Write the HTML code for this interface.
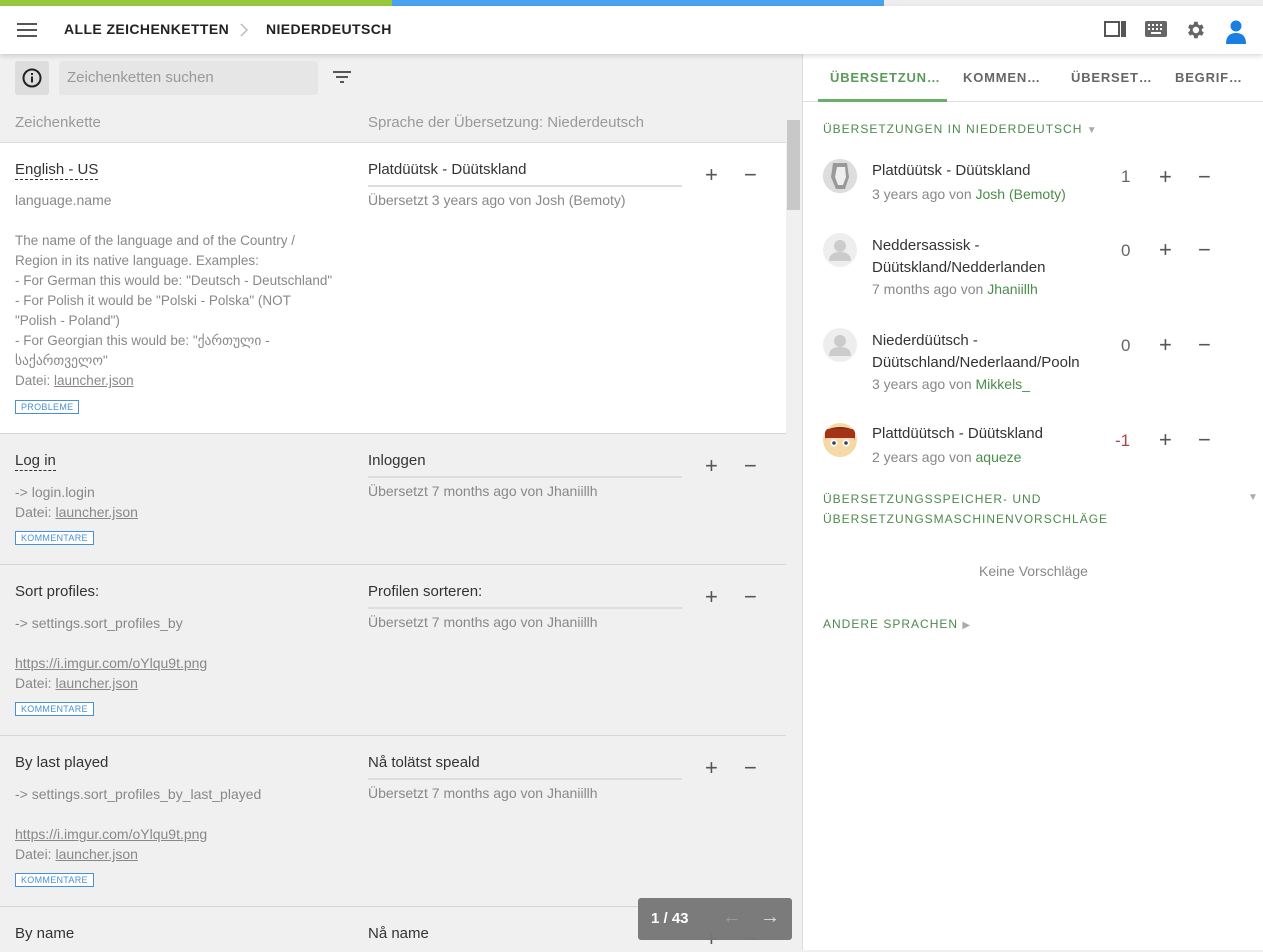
<!DOCTYPE html>
<html><head><meta charset="utf-8"><style>
*{box-sizing:border-box;margin:0;padding:0}
body{width:1263px;height:950px;overflow:hidden;font-family:"Liberation Sans","DejaVu Sans",sans-serif;background:#f0f0f0;position:relative;color:#333}
.a{position:absolute;white-space:nowrap}
.t{font-size:15px;color:#333}
.s{font-size:14px;color:#888}
.u{text-decoration:underline}
.tag{position:absolute;font-size:9px;color:#4a90d9;border:1px solid #4a90d9;padding:1px 5px;letter-spacing:.3px;background:#fff}
.pm{position:absolute;font-size:22px;color:#555;font-weight:300}
.line{position:absolute;height:2px;background:#ddd;width:314px;left:368px}
.sep{position:absolute;left:0;width:786px;height:1px;background:#d6d6d6}
.g{color:#4b8b4b}
.av{position:absolute;left:823px;width:34px;height:34px;border-radius:50%;background:#eee;overflow:hidden}
</style></head><body>
<div class="a" style="left:0;top:0;width:392px;height:6px;background:#98c93c"></div>
<div class="a" style="left:392px;top:0;width:492px;height:6px;background:#4aa3f0"></div>
<div class="a" style="left:884px;top:0;width:379px;height:6px;background:#eee"></div>
<div class="a" style="left:0;top:6px;width:1263px;height:48px;background:#fff;box-shadow:0 2px 5px rgba(0,0,0,.15);z-index:2"></div>
<div style="position:absolute;z-index:3;left:0;top:6px;width:1263px;height:48px">
<svg class="a" style="left:17px;top:16px" width="20" height="16"><rect y="1" width="20" height="2" fill="#555"/><rect y="7" width="20" height="2" fill="#555"/><rect y="13" width="20" height="2" fill="#555"/></svg>
<div class="a" style="left:64px;top:15px;font-size:14px;font-weight:bold;letter-spacing:.4px;color:#222">ALLE ZEICHENKETTEN</div>
<svg class="a" style="left:239px;top:17px" width="10" height="14"><path d="M2 1l6 6-6 6" fill="none" stroke="#bbb" stroke-width="1.5"/></svg>
<div class="a" style="left:266px;top:15px;font-size:14px;font-weight:bold;letter-spacing:.4px;color:#222">NIEDERDEUTSCH</div>
<svg class="a" style="left:1104px;top:15px" width="23" height="17"><rect x="1" y="1" width="14" height="14" fill="none" stroke="#555" stroke-width="2"/><rect x="17" y="0" width="5" height="16" fill="#555"/></svg>
<svg class="a" style="left:1145px;top:15px" width="22" height="16"><rect width="22" height="16" rx="2" fill="#666"/><g fill="#fff"><rect x="3" y="3" width="2" height="2"/><rect x="7" y="3" width="2" height="2"/><rect x="11" y="3" width="2" height="2"/><rect x="15" y="3" width="2" height="2"/><rect x="3" y="7" width="2" height="2"/><rect x="7" y="7" width="2" height="2"/><rect x="11" y="7" width="2" height="2"/><rect x="15" y="7" width="2" height="2"/><rect x="6" y="11" width="10" height="2"/></g></svg>
<svg class="a" style="left:1184px;top:13px" width="22" height="22" viewBox="0 0 24 24"><path fill="#666" d="M19.4 13a7.5 7.5 0 000-2l2.1-1.6-2-3.5-2.5 1a7.6 7.6 0 00-1.7-1L15 3h-4l-.4 2.7a7.6 7.6 0 00-1.7 1l-2.5-1-2 3.5L6.5 11a7.5 7.5 0 000 2l-2.1 1.6 2 3.5 2.5-1a7.6 7.6 0 001.7 1L11 21h4l.4-2.7a7.6 7.6 0 001.7-1l2.5 1 2-3.5zM13 15.5A3.5 3.5 0 1113 8.5a3.5 3.5 0 010 7z"/></svg>
<svg class="a" style="left:1226px;top:14px" width="20" height="24"><circle cx="10" cy="6" r="5.5" fill="#1a7fe0"/><path d="M0 24c0-8 4-11 10-11s10 3 10 11z" fill="#1a7fe0"/></svg>
</div>

<div class="a" style="left:15px;top:61px;width:34px;height:34px;background:#ddd;border-radius:3px"></div>
<svg class="a" style="left:22px;top:68px" width="20" height="20"><circle cx="10" cy="10" r="8.5" fill="none" stroke="#222" stroke-width="2"/><rect x="9" y="8.5" width="2" height="6" fill="#222"/><rect x="9" y="5" width="2" height="2" fill="#222"/></svg>
<div class="a" style="left:59px;top:61px;width:259px;height:34px;background:#e6e6e6;border-radius:3px"></div>
<div class="a" style="left:67px;top:69px;font-size:15px;color:#999">Zeichenketten suchen</div>
<svg class="a" style="left:333px;top:71px" width="18" height="13"><rect width="18" height="2" fill="#555"/><rect x="3" y="5" width="12" height="2" fill="#555"/><rect x="7" y="10" width="4" height="2" fill="#555"/></svg>
<div class="a" style="left:15px;top:114px;font-size:15px;color:#999">Zeichenkette</div>
<div class="a" style="left:368px;top:114px;font-size:15px;color:#999">Sprache der Übersetzung: Niederdeutsch</div>

<div class="a" style="left:0;top:142px;width:786px;height:1px;background:#ddd"></div>
<div class="a" style="left:0;top:143px;width:786px;height:290px;background:#fff"></div>
<div class="a" style="left:786px;top:112px;width:16px;height:838px;background:#f0f0f0"></div>
<div class="a" style="left:787px;top:120px;width:13px;height:90px;background:#c8c8c8"></div>
<div class="a" style="left:802px;top:54px;width:1px;height:896px;background:#ddd"></div>

<div class="a t" style="left:15px;top:161px;border-bottom:1px dashed #333;line-height:18px">English - US</div>
<div class="a s" style="left:15px;top:192px">language.name</div>
<div class="a s" style="left:15px;top:231px;line-height:20px;font-size:13.5px">The name of the language and of the Country /<br>Region in its native language. Examples:<br>- For German this would be: "Deutsch - Deutschland"<br>- For Polish it would be "Polski - Polska" (NOT<br>"Polish - Poland")<br>- For Georgian this would be: "ქართული -<br>საქართველო"<br>Datei: <span class="u">launcher.json</span></div>
<div class="tag" style="left:15px;top:400px">PROBLEME</div>
<div class="a t" style="left:368px;top:161px">Platdüütsk - Düütskland</div>
<div class="line" style="top:185px"></div>
<div class="a s" style="left:368px;top:192px">Übersetzt 3 years ago von Josh (Bemoty)</div>
<div class="pm" style="left:705px;top:162px">+</div><div class="pm" style="left:744px;top:162px">−</div>
<div class="sep" style="top:433px"></div>

<div class="a t" style="left:15px;top:452px;border-bottom:1px dashed #333;line-height:18px">Log in</div>
<div class="a s" style="left:15px;top:482px;line-height:20px">-&gt; login.login<br>Datei: <span class="u">launcher.json</span></div>
<div class="tag" style="left:15px;top:531px">KOMMENTARE</div>
<div class="a t" style="left:368px;top:452px">Inloggen</div>
<div class="line" style="top:476px"></div>
<div class="a s" style="left:368px;top:483px">Übersetzt 7 months ago von Jhaniillh</div>
<div class="pm" style="left:705px;top:453px">+</div><div class="pm" style="left:744px;top:453px">−</div>
<div class="sep" style="top:564px"></div>

<div class="a t" style="left:15px;top:583px">Sort profiles:</div>
<div class="a s" style="left:15px;top:613px;line-height:20px">-&gt; settings.sort_profiles_by<br><br><span class="u">https://i.imgur.com/oYlqu9t.png</span><br>Datei: <span class="u">launcher.json</span></div>
<div class="tag" style="left:15px;top:702px">KOMMENTARE</div>
<div class="a t" style="left:368px;top:583px">Profilen sorteren:</div>
<div class="line" style="top:607px"></div>
<div class="a s" style="left:368px;top:614px">Übersetzt 7 months ago von Jhaniillh</div>
<div class="pm" style="left:705px;top:584px">+</div><div class="pm" style="left:744px;top:584px">−</div>
<div class="sep" style="top:735px"></div>

<div class="a t" style="left:15px;top:754px">By last played</div>
<div class="a s" style="left:15px;top:784px;line-height:20px">-&gt; settings.sort_profiles_by_last_played<br><br><span class="u">https://i.imgur.com/oYlqu9t.png</span><br>Datei: <span class="u">launcher.json</span></div>
<div class="tag" style="left:15px;top:873px">KOMMENTARE</div>
<div class="a t" style="left:368px;top:754px">Nå tolätst speald</div>
<div class="line" style="top:778px"></div>
<div class="a s" style="left:368px;top:785px">Übersetzt 7 months ago von Jhaniillh</div>
<div class="pm" style="left:705px;top:755px">+</div><div class="pm" style="left:744px;top:755px">−</div>
<div class="sep" style="top:906px"></div>

<div class="a t" style="left:15px;top:925px">By name</div>
<div class="a t" style="left:368px;top:925px">Nå name</div>
<div class="pm" style="left:705px;top:926px">+</div><div class="pm" style="left:744px;top:926px">−</div>
<div class="a" style="left:638px;top:898px;width:154px;height:42px;background:#777;border-radius:3px;opacity:.97"></div>
<div class="a" style="left:651px;top:910px;font-size:15px;font-weight:bold;color:#fff">1 / 43</div>
<div class="a" style="left:722px;top:906px;font-size:20px;color:#999">←</div>
<div class="a" style="left:760px;top:906px;font-size:20px;color:#ddd">→</div>

<div class="a" style="left:803px;top:54px;width:460px;height:896px;background:#fff"></div>
<div class="a" style="left:803px;top:101px;width:460px;height:1px;background:#ddd"></div>
<div class="a" style="left:818px;top:99px;width:129px;height:3px;background:#6aae6a"></div>
<div class="a" style="left:830px;top:70px;font-size:13px;font-weight:bold;letter-spacing:.8px;color:#5a9a5a">ÜBERSETZUN…</div>
<div class="a" style="left:963px;top:70px;font-size:13px;font-weight:bold;letter-spacing:.8px;color:#666">KOMMEN…</div>
<div class="a" style="left:1071px;top:70px;font-size:13px;font-weight:bold;letter-spacing:.8px;color:#666">ÜBERSET…</div>
<div class="a" style="left:1175px;top:70px;font-size:13px;font-weight:bold;letter-spacing:.8px;color:#666">BEGRIF…</div>
<div class="a g" style="left:823px;top:122px;font-size:12px;letter-spacing:1px">ÜBERSETZUNGEN IN NIEDERDEUTSCH <span style="color:#aaa;font-size:10px">▼</span></div>

<div class="av" style="top:159px;background:#ccc"><svg width="34" height="34"><rect width="34" height="34" fill="#ddd"/><path d="M10 4h14l2 14-4 12H13L8 18z" fill="#999"/><path d="M14 8h8l1 10-3 8h-5l-3-8z" fill="#eee"/></svg></div>
<div class="a t" style="left:872px;top:162px">Platdüütsk - Düütskland</div>
<div class="a s" style="left:872px;top:186px">3 years ago von <span class="g">Josh (Bemoty)</span></div>
<div class="a" style="left:1121px;top:167px;font-size:17px;color:#666">1</div>
<div class="pm" style="left:1159px;top:164px">+</div><div class="pm" style="left:1198px;top:164px">−</div>

<div class="av" style="top:233px"><svg width="34" height="34"><circle cx="17" cy="13" r="6" fill="#ccc"/><path d="M6 28c0-7 5-9 11-9s11 2 11 9z" fill="#ccc"/></svg></div>
<div class="a t" style="left:872px;top:235px;line-height:22px">Neddersassisk -<br>Düütskland/Nedderlanden</div>
<div class="a s" style="left:872px;top:281px">7 months ago von <span class="g">Jhaniillh</span></div>
<div class="a" style="left:1121px;top:241px;font-size:17px;color:#666">0</div>
<div class="pm" style="left:1159px;top:237px">+</div><div class="pm" style="left:1198px;top:237px">−</div>

<div class="av" style="top:328px"><svg width="34" height="34"><circle cx="17" cy="13" r="6" fill="#ccc"/><path d="M6 28c0-7 5-9 11-9s11 2 11 9z" fill="#ccc"/></svg></div>
<div class="a t" style="left:872px;top:330px;line-height:22px">Niederdüütsch -<br>Düütschland/Nederlaand/Pooln</div>
<div class="a s" style="left:872px;top:376px">3 years ago von <span class="g">Mikkels_</span></div>
<div class="a" style="left:1121px;top:336px;font-size:17px;color:#666">0</div>
<div class="pm" style="left:1159px;top:332px">+</div><div class="pm" style="left:1198px;top:332px">−</div>

<div class="av" style="top:423px;background:#f5d9a8"><svg width="34" height="34"><path d="M2 18C2 4 32 4 32 18V10C30 2 4 2 2 10z" fill="#8b2a14"/><rect x="2" y="6" width="30" height="9" fill="#a33318"/><circle cx="11" cy="20" r="3.5" fill="#fff"/><circle cx="23" cy="20" r="3.5" fill="#fff"/><circle cx="11" cy="20" r="1.8" fill="#345"/><circle cx="23" cy="20" r="1.8" fill="#345"/></svg></div>
<div class="a t" style="left:872px;top:425px">Plattdüütsch - Düütskland</div>
<div class="a s" style="left:872px;top:449px">2 years ago von <span class="g">aqueze</span></div>
<div class="a" style="left:1115px;top:431px;font-size:17px;color:#b04444">-1</div>
<div class="pm" style="left:1159px;top:427px">+</div><div class="pm" style="left:1198px;top:427px">−</div>

<div class="a g" style="left:823px;top:489px;font-size:12px;letter-spacing:1px;line-height:20px">ÜBERSETZUNGSSPEICHER- UND<br>ÜBERSETZUNGSMASCHINENVORSCHLÄGE</div>
<div class="a" style="left:1248px;top:492px;font-size:10px;color:#aaa">▼</div>
<div class="a" style="left:979px;top:563px;font-size:14px;color:#888">Keine Vorschläge</div>
<div class="a g" style="left:823px;top:617px;font-size:12px;letter-spacing:1px">ANDERE SPRACHEN <span style="color:#aaa;font-size:10px">▶</span></div>
</body></html>
